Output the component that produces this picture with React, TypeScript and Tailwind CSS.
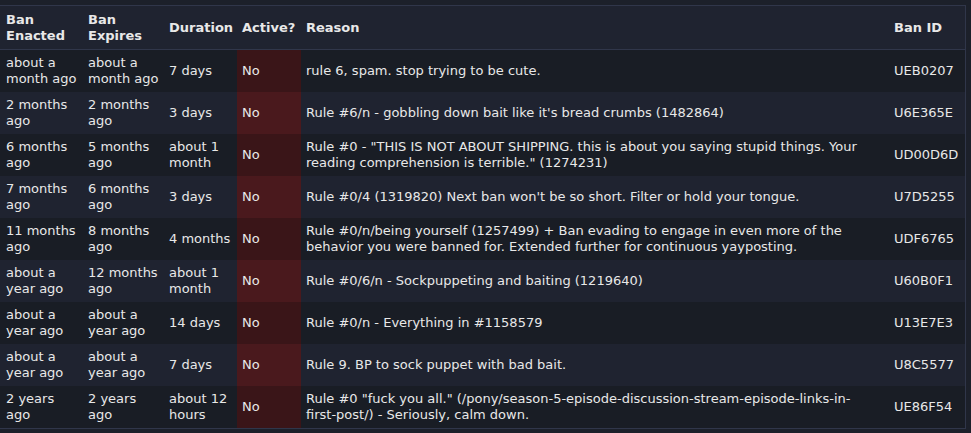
/**
 * User ban history table, dark theme.
 */

interface Ban {
  readonly enacted: string;
  readonly expires: string;
  readonly duration: string;
  readonly active: boolean;
  readonly reason: string;
  readonly id: string;
}

const BANS: Ban[] = [
  { enacted: "about a month ago", expires: "about a month ago", duration: "7 days", active: false, reason: "rule 6, spam. stop trying to be cute.", id: "UEB0207" },
  { enacted: "2 months ago", expires: "2 months ago", duration: "3 days", active: false, reason: "Rule #6/n - gobbling down bait like it's bread crumbs (1482864)", id: "U6E365E" },
  { enacted: "6 months ago", expires: "5 months ago", duration: "about 1 month", active: false, reason: "Rule #0 - \"THIS IS NOT ABOUT SHIPPING. this is about you saying stupid things. Your reading comprehension is terrible.\" (1274231)", id: "UD00D6D" },
  { enacted: "7 months ago", expires: "6 months ago", duration: "3 days", active: false, reason: "Rule #0/4 (1319820) Next ban won't be so short. Filter or hold your tongue.", id: "U7D5255" },
  { enacted: "11 months ago", expires: "8 months ago", duration: "4 months", active: false, reason: "Rule #0/n/being yourself (1257499) + Ban evading to engage in even more of the behavior you were banned for. Extended further for continuous yayposting.", id: "UDF6765" },
  { enacted: "about a year ago", expires: "12 months ago", duration: "about 1 month", active: false, reason: "Rule #0/6/n - Sockpuppeting and baiting (1219640)", id: "U60B0F1" },
  { enacted: "about a year ago", expires: "about a year ago", duration: "14 days", active: false, reason: "Rule #0/n - Everything in #1158579", id: "U13E7E3" },
  { enacted: "about a year ago", expires: "about a year ago", duration: "7 days", active: false, reason: "Rule 9. BP to sock puppet with bad bait.", id: "U8C5577" },
  { enacted: "2 years ago", expires: "2 years ago", duration: "about 12 hours", active: false, reason: "Rule #0 \"fuck you all.\" (/pony/season-5-episode-discussion-stream-episode-links-in-first-post/) - Seriously, calm down.", id: "UE86F54" },
];

export default function App(): React.ReactElement {
  return (
    <div className="min-h-[433px] w-[971px] bg-[#1c202a] pt-[5px] font-['DejaVu_Sans',Verdana,sans-serif] text-[13px] leading-4 text-[#e8e8e8]">
      <table className="w-[965px] table-fixed border-collapse border-y border-r border-[#30364a] bg-[#1f2330]">
        <colgroup>
          <col className="w-[82px]" />
          <col className="w-[82px]" />
          <col className="w-[73px]" />
          <col className="w-[64px]" />
          <col className="w-[587px]" />
          <col className="w-[77px]" />
        </colgroup>
        <thead>
          <tr className="h-[44px] border-b border-[#30364a] text-left align-middle font-bold">
            <th className="pl-[6px] pr-1">Ban Enacted</th>
            <th className="pl-[6px] pr-1">Ban Expires</th>
            <th className="pl-[5px]">Duration</th>
            <th className="pl-[5px]">Active?</th>
            <th className="pl-[5px]">Reason</th>
            <th className="pl-[6px]">Ban ID</th>
          </tr>
        </thead>
        <tbody>
          {BANS.map((ban, i) => {
            const odd = i % 2 === 0;
            return (
              <tr
                key={ban.id}
                className={odd ? "h-[42px] bg-[#191d25] align-middle" : "h-[42px] bg-[#1f2330] align-middle"}
              >
                <td className="py-[5px] pl-[6px] pr-1">{ban.enacted}</td>
                <td className="py-[5px] pl-[6px] pr-1">{ban.expires}</td>
                <td className="py-[5px] pl-[5px] pr-1">{ban.duration}</td>
                <td className={odd ? "bg-[#3a1518] py-[5px] pl-[5px]" : "bg-[#4a191d] py-[5px] pl-[5px]"}>
                  {ban.active ? "Yes" : "No"}
                </td>
                <td className="py-[5px] pl-[5px] pr-[8px]">{ban.reason}</td>
                <td className="py-[5px] pl-[6px]">{ban.id}</td>
              </tr>
            );
          })}
        </tbody>
      </table>
    </div>
  );
}
